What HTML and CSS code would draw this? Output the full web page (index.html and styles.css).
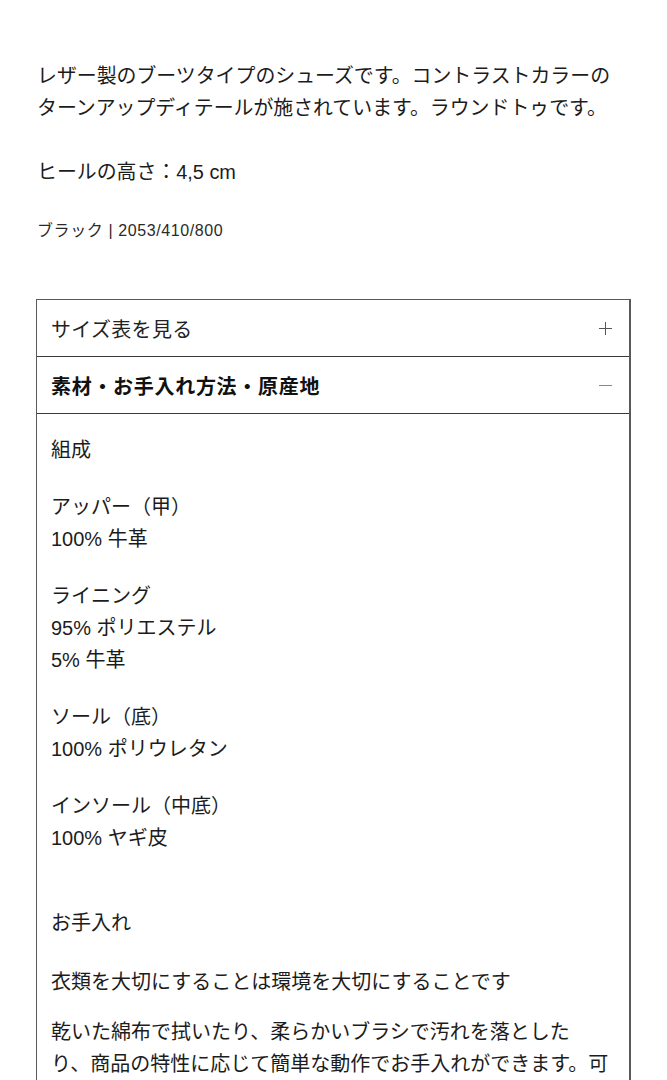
FILE: index.html
```html
<!DOCTYPE html>
<html lang="ja">
<head>
<meta charset="utf-8">
<link rel="stylesheet" href="styles.css">
</head>
<body>
<main class="page">
  <p class="desc">レザー製のブーツタイプのシューズです。コントラストカラーの<br>ターンアップディテールが施されています。ラウンドトゥです。</p>
  <p class="desc heel">ヒールの高さ：4,5 cm</p>
  <p class="ref">ブラック | 2053/410/800</p>

  <section class="accordion">
    <div class="acc-row">
      <span class="acc-title">サイズ表を見る</span>
      <span class="acc-icon plus"></span>
    </div>
    <div class="acc-row open">
      <span class="acc-title bold">素材・お手入れ方法・原産地</span>
      <span class="acc-icon minus"></span>
    </div>
    <div class="acc-body">
      <p class="grp">組成</p>
      <p class="grp">アッパー（甲）<br>100% 牛革</p>
      <p class="grp">ライニング<br>95% ポリエステル<br>5% 牛革</p>
      <p class="grp">ソール（底）<br>100% ポリウレタン</p>
      <p class="grp">インソール（中底）<br>100% ヤギ皮</p>
      <p class="grp care">お手入れ</p>
      <p class="grp env">衣類を大切にすることは環境を大切にすることです</p>
      <p class="grp tips">乾いた綿布で拭いたり、柔らかいブラシで汚れを落とした<br>り、商品の特性に応じて簡単な動作でお手入れができます。可能な限り長くご愛用いただけます。</p>
    </div>
  </section>
</main>
</body>
</html>
```

FILE: styles.css
```css
html, body {
  margin: 0;
  padding: 0;
  background: #ffffff;
}
body {
  font-family: "Liberation Sans", "Noto Sans CJK JP", sans-serif;
  color: #1c1c1c;
  overflow: hidden;
}
.page {
  padding: 60px 36px 0 37px;
}
p {
  margin: 0;
}
.desc {
  font-size: 19.9px;
  line-height: 32px;
}
.heel {
  margin-top: 32px;
}
.ref {
  margin-top: 31px;
  font-size: 16px;
  line-height: 24px;
  letter-spacing: 0.6px;
  color: #2a2a2a;
}
.accordion {
  margin-top: 56px;
  margin-left: -1px;
  border: 1px solid #5a5a5a;
  border-right: 2px solid #5a5a5a;
  border-bottom: none;
}
.acc-row {
  height: 56px;
  border-bottom: 1px solid #3a3a3a;
  display: flex;
  align-items: center;
  justify-content: space-between;
  padding: 0 17px 0 14px;
}
.acc-title {
  font-size: 20px;
  letter-spacing: 0.3px;
  color: #222;
}
.acc-title.bold {
  font-weight: bold;
  letter-spacing: 0.7px;
  color: #111;
}
.acc-icon {
  position: relative;
  width: 13px;
  height: 13px;
}
.acc-icon::before,
.acc-icon::after {
  content: "";
  position: absolute;
  background: #555;
}
.acc-icon::before {
  left: 0;
  right: 0;
  top: 6px;
  height: 1px;
}
.plus::after {
  top: 0;
  bottom: 0;
  left: 6px;
  width: 1px;
}
.minus::before {
  background: #888;
}
.minus::after {
  display: none;
}
.acc-body {
  padding: 20px 14px 0 14px;
}
.grp {
  font-size: 20px;
  line-height: 32px;
  color: #1c1c1c;
}
.grp + .grp {
  margin-top: 25px;
}
.grp.care {
  margin-top: 53px;
}
.grp.env {
  margin-top: 27px;
}
.grp.tips {
  margin-top: 18px;
}
```
